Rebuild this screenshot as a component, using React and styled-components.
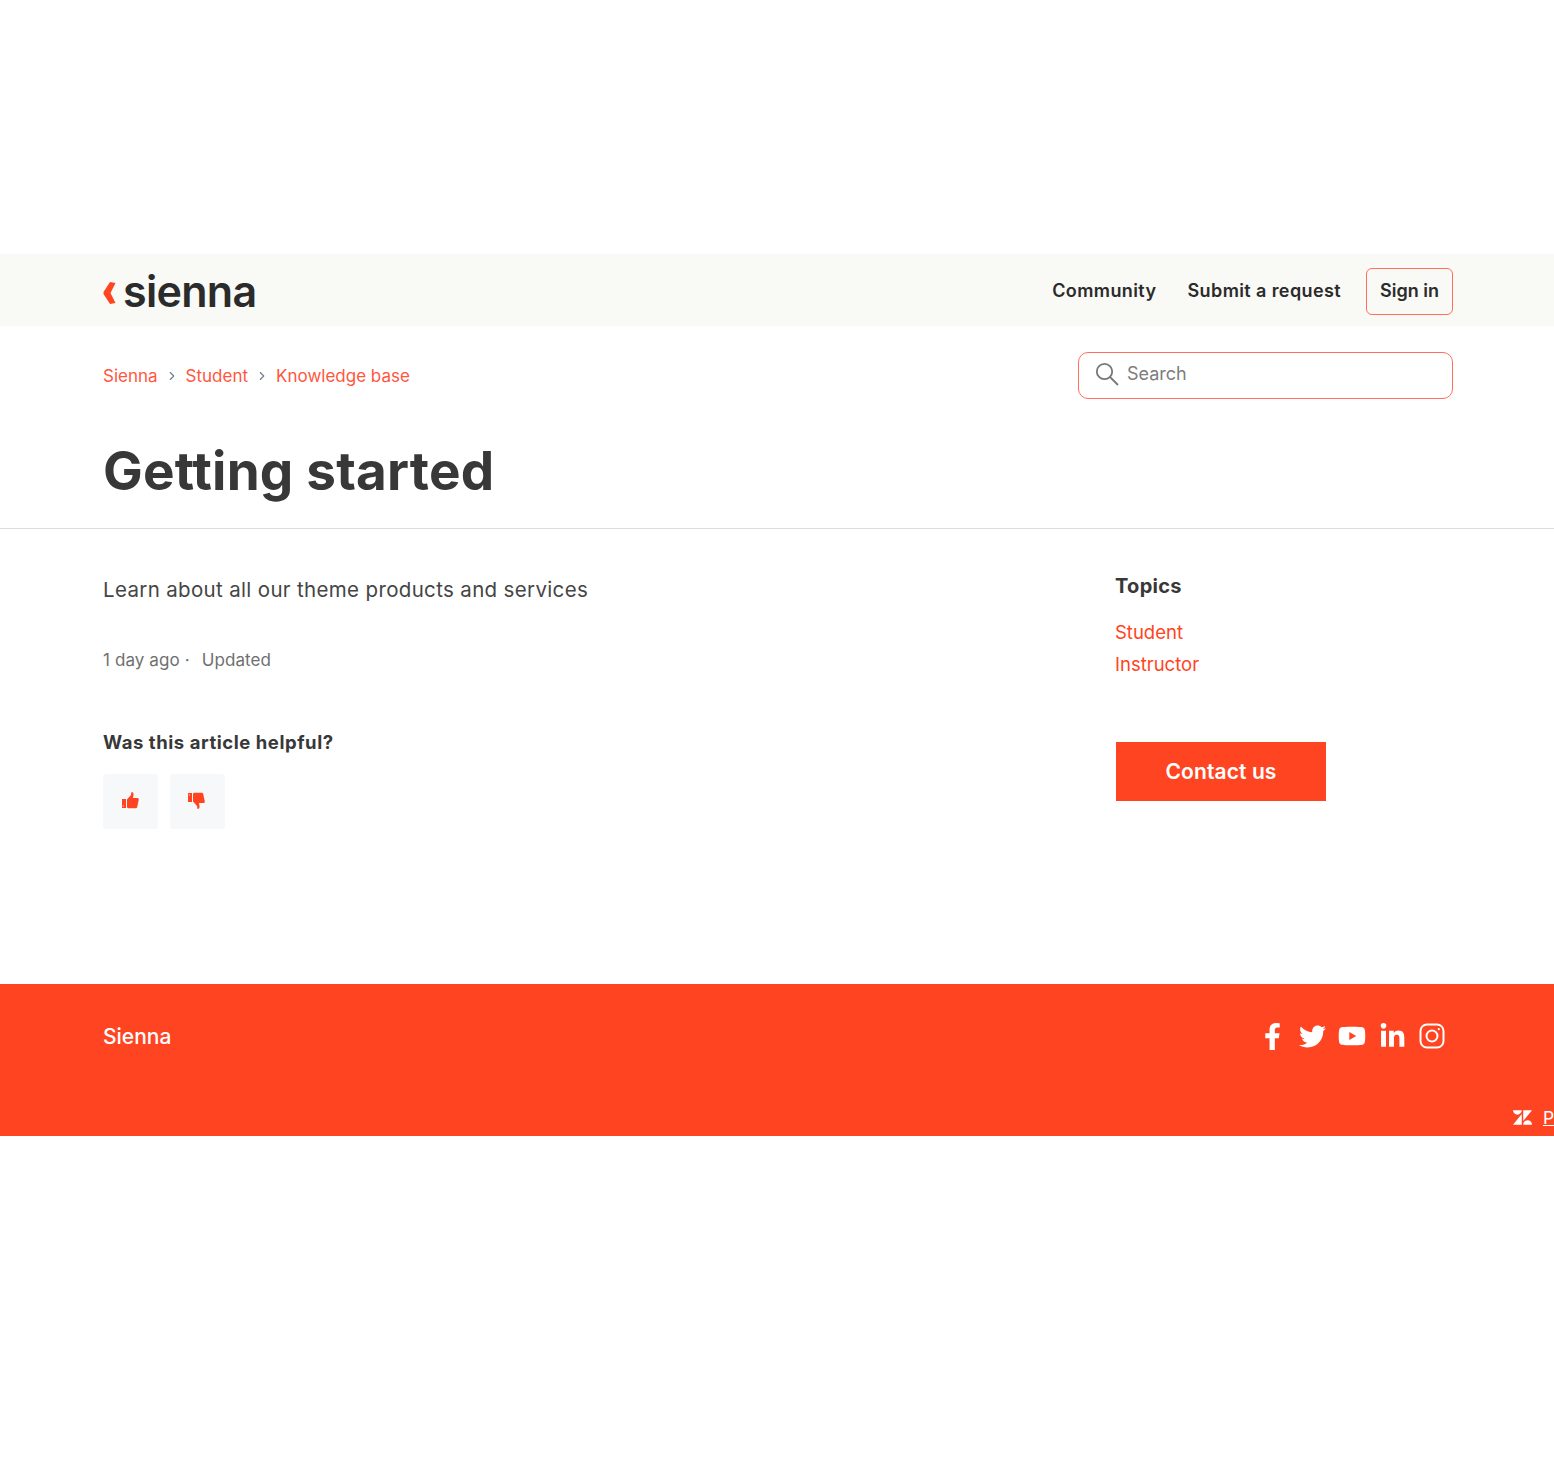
import styled, { createGlobalStyle } from 'styled-components'
import { FaFacebookF, FaTwitter, FaYoutube, FaLinkedinIn } from 'react-icons/fa'
import { SiZendesk } from 'react-icons/si'
import { ChevronRight } from 'lucide-react'

const GlobalStyle = createGlobalStyle`
    html, body {
        margin: 0;
        background: #fff;
        overflow: hidden;
    }
    body {
        font-family: Inter, "Open Sans", "Liberation Sans", sans-serif;
        color: #383838;
    }
    a {
        text-decoration: none;
    }
`

const Page = styled.div`
    height: 1478px;
    padding-top: 254px;
    box-sizing: border-box;
    overflow: hidden;
`

const Header = styled.header`
    height: 72px;
    padding: 2px 101px 0 103px;
    box-sizing: border-box;
    background: #f9f9f5;
    display: flex;
    align-items: center;
    justify-content: space-between;
`

const Logo = styled.a`
    display: flex;
    align-items: center;
    gap: 6px;
    color: #2b2b2b;
    font-size: 43px;
    font-weight: 600;
    letter-spacing: -0.7px;
    line-height: 70px;
`

const Nav = styled.nav`
    display: flex;
    align-items: center;
    gap: 31px;
`

const NavLink = styled.a`
    color: #2b2b2b;
    font-size: 18px;
    font-weight: 600;
    letter-spacing: 0.4px;
    padding-bottom: 2px;
`

const SignIn = styled(NavLink)`
    margin-left: -6px;
    height: 47px;
    padding: 0 13px 2px;
    display: flex;
    align-items: center;
    box-sizing: border-box;
    border: 1px solid #ff6f5c;
    border-radius: 6px;
    letter-spacing: 0;
`

const SubNav = styled.div`
    padding: 26px 101px 0 103px;
    display: flex;
    justify-content: space-between;
    align-items: center;
`

const Crumbs = styled.ol`
    display: flex;
    align-items: center;
    gap: 7px;
    margin: 0;
    padding: 0;
    list-style: none;
    font-size: 17px;
`

const CrumbLink = styled.a`
    color: #ff5640;
`

const SearchBox = styled.div`
    width: 375px;
    height: 47px;
    box-sizing: border-box;
    padding: 0 16px 3px;
    display: flex;
    align-items: center;
    gap: 8px;
    border: 1px solid #ff6f5c;
    border-radius: 10px;
    color: #7d7d7d;
    font-size: 18px;
`

const SearchLabel = styled.span`
    margin-bottom: 2px;
`

const Title = styled.h1`
    margin: 0;
    padding: 41px 103px 25px;
    height: 63px;
    font-size: 53px;
    line-height: 63px;
    font-weight: 700;
    letter-spacing: 0.2px;
    color: #383838;
    border-bottom: 1px solid #dcdcdc;
`

const Content = styled.main`
    display: flex;
    height: 455px;
    padding: 0 0 0 103px;
`

const Article = styled.section`
    width: 1012px;
`

const Lead = styled.p`
    margin: 46px 0 0;
    font-size: 20.5px;
    line-height: 30px;
    letter-spacing: 0.34px;
    color: #454545;
`

const Meta = styled.div`
    margin-top: 45px;
    display: flex;
    gap: 12px;
    font-size: 17px;
    line-height: 20px;
    letter-spacing: 0.1px;
    color: #6f6f6f;
`

const HelpTitle = styled.h3`
    margin: 60px 0 0;
    font-size: 18.5px;
    line-height: 24px;
    font-weight: 700;
    letter-spacing: 0.55px;
    color: #383838;
`

const Votes = styled.div`
    margin-top: 20px;
    display: flex;
    gap: 12px;
`

const VoteButton = styled.button`
    width: 55px;
    height: 55px;
    padding: 0 0 2px;
    border: 0;
    border-radius: 2px;
    background: #f7f8f9;
    display: flex;
    align-items: center;
    justify-content: center;
`

const Aside = styled.aside`
    width: 338px;
`

const AsideTitle = styled.h3`
    margin: 44px 0 0;
    font-size: 20px;
    line-height: 26px;
    font-weight: 700;
    letter-spacing: 0.3px;
    color: #383838;
`

const TopicList = styled.div`
    margin-top: 17px;
    display: flex;
    flex-direction: column;
`

const Topic = styled.a`
    color: #ff4422;
    font-size: 18.5px;
    line-height: 32px;
`

const ContactButton = styled.a`
    margin: 62px 0 0 1px;
    width: 210px;
    height: 59px;
    display: flex;
    align-items: center;
    justify-content: center;
    background: #ff4422;
    color: #fff;
    font-size: 21px;
    font-weight: 600;
    letter-spacing: 0.1px;
`

const Footer = styled.footer`
    height: 152px;
    background: #ff4422;
    color: #fff;
    overflow: hidden;
`

const FooterTop = styled.div`
    height: 104px;
    padding: 0 101px 0 103px;
    box-sizing: border-box;
    display: flex;
    justify-content: space-between;
    align-items: center;
`

const FooterName = styled.a`
    color: #fff;
    font-size: 21px;
    font-weight: 500;
`

const Socials = styled.div`
    display: flex;
    align-items: center;
    margin-right: 1px;
    color: #fff;
`

const SocialIcon = styled.span`
    width: 40px;
    height: 30px;
    display: flex;
    align-items: center;
    justify-content: center;
`

const Powered = styled.div`
    margin: 19px 0 0 1513px;
    width: max-content;
    display: flex;
    align-items: center;
    gap: 11px;
    white-space: nowrap;
    font-size: 17.5px;

    svg {
        flex: none;
    }
`

const PoweredLink = styled.a`
    color: #fff;
    text-decoration: underline;
`

function Chevron() {
    return (
        <svg width="14" height="22" viewBox="0 0 14 22" style={{ marginTop: 4 }}>
            <path d="M12.500 1 L7 0 L0.500 10 L0.500 12 L7 22 L12.500 21 L7.500 11 Z" fill="#ff4422" />
        </svg>
    )
}

function SearchIcon() {
    return (
        <svg width="24" height="24" viewBox="0 0 24 24" fill="none" stroke="#777" strokeWidth="1.8">
            <circle cx="9.500" cy="9.500" r="7.700" />
            <path d="M15 15l8 8" />
        </svg>
    )
}

const thumbPaths = (
    <>
        <path d="M1 8h4v9H1z M1.800 14.500v1h1v-1z" fill="#ff4422" fillRule="evenodd" />
        <path d="M6 8.500 10 4 10.500 1c1.800 0 2.300 1.500 2 3L12 7h4.500c1.200 0 1.500 1 1.200 2l-1.500 7c-.2.800-.8 1.200-1.500 1.200H8c-1 0-2-.5-2-1z" fill="#ff4422" />
    </>
)

function ThumbUp() {
    return <svg width="17" height="17" viewBox="1 1 17 17">{thumbPaths}</svg>
}

function ThumbDown() {
    return (
        <svg width="17" height="17" viewBox="1 1 17 17" style={{ transform: 'scaleY(-1)', marginLeft: -2 }}>
            {thumbPaths}
        </svg>
    )
}

function InstagramIcon() {
    return (
        <svg width="26" height="26" viewBox="0 0 26 26" fill="none" stroke="#fff" strokeWidth="2">
            <rect x="1.500" y="1.500" width="23" height="23" rx="6.500" />
            <circle cx="13" cy="13" r="5.500" />
            <circle cx="19.800" cy="6.200" r="1.100" fill="#fff" stroke="none" />
        </svg>
    )
}

const socials = [
    <FaFacebookF size={27} />,
    <FaTwitter size={27} />,
    <FaYoutube size={28} />,
    <FaLinkedinIn size={27} style={{ marginTop: 1 }} />,
    <InstagramIcon />,
]

export default function App() {
    return (
        <Page>
            <GlobalStyle />
            <Header>
                <Logo href="#">
                    <Chevron />
                    sienna
                </Logo>
                <Nav>
                    <NavLink href="#">Community</NavLink>
                    <NavLink href="#">Submit a request</NavLink>
                    <SignIn href="#">Sign in</SignIn>
                </Nav>
            </Header>
            <SubNav>
                <Crumbs>
                    <li><CrumbLink href="#">Sienna</CrumbLink></li>
                    <ChevronRight size={14} color="#6f7f8f" />
                    <li><CrumbLink href="#">Student</CrumbLink></li>
                    <ChevronRight size={14} color="#6f7f8f" />
                    <li><CrumbLink href="#">Knowledge base</CrumbLink></li>
                </Crumbs>
                <SearchBox>
                    <SearchIcon />
                    <SearchLabel>Search</SearchLabel>
                </SearchBox>
            </SubNav>
            <Title>Getting started</Title>
            <Content>
                <Article>
                    <Lead>Learn about all our theme products and services</Lead>
                    <Meta>
                        <span>1 day ago ·</span>
                        <span>Updated</span>
                    </Meta>
                    <HelpTitle>Was this article helpful?</HelpTitle>
                    <Votes>
                        <VoteButton aria-label="Yes"><ThumbUp /></VoteButton>
                        <VoteButton aria-label="No"><ThumbDown /></VoteButton>
                    </Votes>
                </Article>
                <Aside>
                    <AsideTitle>Topics</AsideTitle>
                    <TopicList>
                        <Topic href="#">Student</Topic>
                        <Topic href="#">Instructor</Topic>
                    </TopicList>
                    <ContactButton href="#">Contact us</ContactButton>
                </Aside>
            </Content>
            <Footer>
                <FooterTop>
                    <FooterName href="#">Sienna</FooterName>
                    <Socials>
                        {socials.map((icon, i) => (
                            <SocialIcon key={i}>{icon}</SocialIcon>
                        ))}
                    </Socials>
                </FooterTop>
                <Powered>
                    <SiZendesk size={19} />
                    <PoweredLink href="#">Powered by Zendesk</PoweredLink>
                </Powered>
            </Footer>
        </Page>
    )
}
